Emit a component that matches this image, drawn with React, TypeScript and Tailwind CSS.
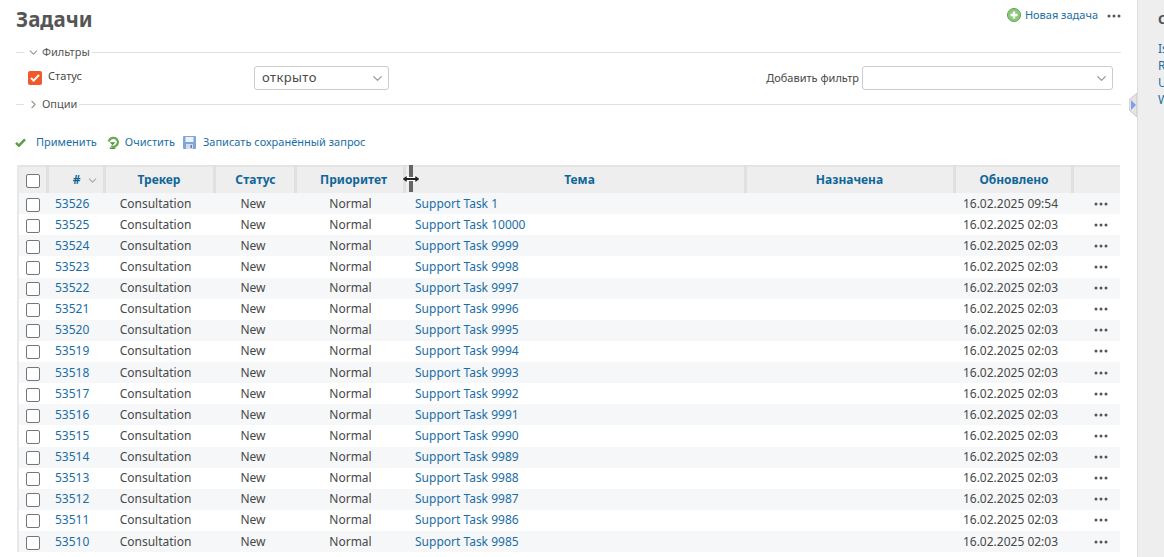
import { ChevronDown, ChevronRight } from "lucide-react";

const rows = [
  ["53526", "Support Task 1", "16.02.2025 09:54"],
  ["53525", "Support Task 10000", "16.02.2025 02:03"],
  ["53524", "Support Task 9999", "16.02.2025 02:03"],
  ["53523", "Support Task 9998", "16.02.2025 02:03"],
  ["53522", "Support Task 9997", "16.02.2025 02:03"],
  ["53521", "Support Task 9996", "16.02.2025 02:03"],
  ["53520", "Support Task 9995", "16.02.2025 02:03"],
  ["53519", "Support Task 9994", "16.02.2025 02:03"],
  ["53518", "Support Task 9993", "16.02.2025 02:03"],
  ["53517", "Support Task 9992", "16.02.2025 02:03"],
  ["53516", "Support Task 9991", "16.02.2025 02:03"],
  ["53515", "Support Task 9990", "16.02.2025 02:03"],
  ["53514", "Support Task 9989", "16.02.2025 02:03"],
  ["53513", "Support Task 9988", "16.02.2025 02:03"],
  ["53512", "Support Task 9987", "16.02.2025 02:03"],
  ["53511", "Support Task 9986", "16.02.2025 02:03"],
  ["53510", "Support Task 9985", "16.02.2025 02:03"],
];

function Dots() {
  return (
    <svg width="14" height="4" viewBox="0 0 14 4" className="block" fill="#555">
      <circle cx="2" cy="2" r="1.5" />
      <circle cx="7" cy="2" r="1.5" />
      <circle cx="12" cy="2" r="1.5" />
    </svg>
  );
}

function Checkbox() {
  return <span className="mt-[2px] block h-[14px] w-[14px] rounded-[2px] border border-[#767676] bg-white" />;
}

function AddIcon() {
  return (
    <svg width="14" height="14" viewBox="0 0 15 15" className="block">
      <circle cx="7.5" cy="7.5" r="7" fill="#8cc97a" stroke="#5c9e4c" />
      <path d="M7.5 3.8v7.4M3.8 7.5h7.4" stroke="#fff" strokeWidth="2.6" />
    </svg>
  );
}

function CheckIcon() {
  return (
    <svg width="11" height="9" viewBox="0 0 12 10" className="block">
      <path d="M1 5.5l3.2 3L11 1.5" fill="none" stroke="#5a9e4b" strokeWidth="2.8" />
    </svg>
  );
}

function ReloadIcon() {
  return (
    <svg width="12" height="13" viewBox="0 0 13 14" className="block">
      <path d="M2 6a5 5 0 0 1 9.5-1A5 5 0 0 1 4.5 11" fill="none" stroke="#6aa84f" strokeWidth="2.4" />
      <path d="M3 6.8h6L6 10z" fill="#4f8f3c" />
      <path d="M3 12.6a5 5 0 0 0 6 0" fill="none" stroke="#4f8f3c" strokeWidth="1.4" />
    </svg>
  );
}

function SaveIcon() {
  return (
    <svg width="13" height="13" viewBox="0 0 13 13" className="block">
      <rect x="0" y="0" width="13" height="13" rx="1" fill="#7ea6d8" />
      <rect x="2.5" y="1" width="8" height="5" fill="#eef3fa" />
      <rect x="3" y="8" width="7" height="5" fill="#d5dce8" />
      <rect x="7.5" y="9" width="1.5" height="3" fill="#5c7cab" />
    </svg>
  );
}

function LegendRow({ label, open }: { label: string; open: boolean }) {
  return (
    <div className="flex h-[14px] items-center">
      <span className="h-px w-[8px] bg-[#e0e0e0]" />
      <span className="flex w-[18px] justify-center text-[#999]">
        {open ? <ChevronDown size={13} strokeWidth={2} /> : <ChevronRight size={13} strokeWidth={2} />}
      </span>
      <span className="pr-[2px] text-[11px] text-[#555]">{label}</span>
      <span className="h-px flex-1 bg-[#e0e0e0]" />
    </div>
  );
}

function Th({ children, last, className = "" }: { children?: React.ReactNode; last?: boolean; className?: string }) {
  return (
    <th
      className={`h-[27px] border-t-2 border-t-[#e4e4e4] bg-[#eeeeee] p-0 text-center text-[12px] font-bold text-[#169] ${
        last ? "" : "border-r-[3px] border-r-[#e0e0e0]"
      } ${className}`}
    >
      {children}
    </th>
  );
}

export default function App() {
  return (
    <div className="flex h-[557px] w-[1164px] overflow-hidden bg-white font-['Noto_Sans',sans-serif] text-[#484848]">
      <main className="relative w-[1137px] shrink-0 pl-[17px] pr-[17px]">
        <div className="flex h-[45px] items-start justify-between">
          <h2 className="-ml-px mt-[5px] text-[20.5px] font-bold leading-[28px] text-[#555]">Задачи</h2>
          <div className="mr-[-1px] mt-[7px] flex items-center">
            <AddIcon />
            <a className="ml-[4px] text-[11px] leading-[15px] text-[#1a6ea6]">Новая задача</a>
            <span className="ml-[9px] mt-[3px]">
              <Dots />
            </span>
          </div>
        </div>

        <div className="-mr-[1px] -ml-px">
          <LegendRow label="Фильтры" open />
          <div className="flex h-[38px] items-center">
            <span className="ml-[12px] flex h-[14px] w-[14px] items-center justify-center rounded-[2px] bg-[#f1592a]">
              <svg width="10" height="8" viewBox="0 0 10 8">
                <path d="M1 4l2.6 2.6L9 1" fill="none" stroke="#fff" strokeWidth="2" />
              </svg>
            </span>
            <span className="mb-[3px] ml-[6px] w-[206px] text-[11px] text-[#484848]">Статус</span>
            <span className="flex h-[24px] w-[135px] items-center justify-between rounded-[3px] border border-[#ccc] pl-[7px] pr-[3px] text-[13px] tracking-[0.4px]">
              открыто
              <ChevronDown size={15} strokeWidth={2} className="text-[#999]" />
            </span>
            <span className="ml-auto mr-[3px] text-[11px]">Добавить фильтр</span>
            <span className="mr-[8px] flex h-[24px] w-[251px] items-center justify-end rounded-[3px] border border-[#ccc] pr-[3px]">
              <ChevronDown size={15} strokeWidth={2} className="text-[#999]" />
            </span>
          </div>
          <LegendRow label="Опции" open={false} />
        </div>

        <div className="-ml-[2px] mt-[21px] flex h-[20px] items-center text-[11px] text-[#1a6ea6]">
          <CheckIcon />
          <a className="ml-[10px]">Применить</a>
          <span className="ml-[10px]">
            <ReloadIcon />
          </span>
          <a className="ml-[6px]">Очистить</a>
          <span className="ml-[8px]">
            <SaveIcon />
          </span>
          <a className="ml-[7px]">Записать сохранённый запрос</a>
        </div>

        <div className="relative mt-[13px] w-[1103px] border-l-2 border-l-[#e8e8e8]">
          <table className="w-[1101px] table-fixed border-collapse text-[12px]">
            <colgroup>
              <col className="w-[28px]" />
              <col className="w-[57px]" />
              <col className="w-[110px]" />
              <col className="w-[81px]" />
              <col className="w-[109px]" />
              <col className="w-[341px]" />
              <col className="w-[209px]" />
              <col className="w-[118px]" />
              <col className="w-[48px]" />
            </colgroup>
            <thead>
              <tr>
                <th className="h-[27px] border-t-2 border-r-[3px] border-t-[#e4e4e4] border-r-[#e0e0e0] bg-[#eeeeee] p-0">
                  <span className="ml-[7px] block">
                    <Checkbox />
                  </span>
                </th>
                <Th>
                  <span className="flex items-center justify-end pr-[4px]">
                    #
                    <ChevronDown size={13} strokeWidth={2} className="ml-[5px] text-[#aaa]" />
                  </span>
                </Th>
                <Th>Трекер</Th>
                <Th className="pl-[2px] tracking-[0.1px]">Статус</Th>
                <Th className="pl-[8px]">Приоритет</Th>
                <Th className="pl-[10px]">Тема</Th>
                <Th>Назначена</Th>
                <Th className="pl-[2px]">Обновлено</Th>
                <Th last />
              </tr>
            </thead>
            <tbody>
              {rows.map((r, i) => (
                <tr key={r[0]} className={i % 2 === 0 ? "h-[21.125px] bg-[#f6f7f8]" : "h-[21.125px] bg-white"}>
                  <td className="p-0">
                    <span className="ml-[7px] block">
                      <Checkbox />
                    </span>
                  </td>
                  <td className="p-0 pl-[8px] text-[#1a6ea6]">{r[0]}</td>
                  <td className="p-0 pr-[7px] text-center">Consultation</td>
                  <td className="p-0 pr-[3px] text-center">New</td>
                  <td className="p-0 pl-[2px] text-center">Normal</td>
                  <td className="p-0 pl-[11px] text-[#1a6ea6]">{r[1]}</td>
                  <td className="p-0" />
                  <td className="whitespace-nowrap p-0 pr-[5px] text-center">{r[2]}</td>
                  <td className="p-0">
                    <span className="ml-[22px] block">
                      <Dots />
                    </span>
                  </td>
                </tr>
              ))}
            </tbody>
          </table>

          {/* column resize cursor */}
          <div className="absolute left-[390px] top-0 h-[27px] w-[4px] bg-[#666]" />
          <svg width="20" height="10" viewBox="0 0 20 10" className="absolute left-[382px] top-[9px]">
            <path d="M1 5l5-4v2.5h8V1l5 4-5 4V6.5H6V9z" fill="#222" stroke="#fff" strokeWidth="1" />
          </svg>
        </div>

        {/* sidebar toggle */}
        <svg width="8" height="24" viewBox="0 0 8 24" className="absolute right-0 top-[93px]">
          <path d="M8 0L0 7v10l8 7z" fill="#e4e4e4" stroke="#c8c8c8" />
          <path d="M2 7l5 5-5 5z" fill="#7f9ef0" />
        </svg>
      </main>

      <aside className="flex-1 border-l border-l-[#ddd] bg-[#eeeeee] pl-[20px] pt-[10px] text-[12px] leading-[17px] text-[#1a6ea6]">
        <div className="mb-[12px] h-[18px] text-[13px] font-bold leading-[18px] text-[#555]">Сводка</div>
        <div className="whitespace-nowrap">Issues</div>
        <div className="whitespace-nowrap">Report</div>
        <div className="whitespace-nowrap">Users</div>
        <div className="whitespace-nowrap">Wiki</div>
      </aside>
    </div>
  );
}
